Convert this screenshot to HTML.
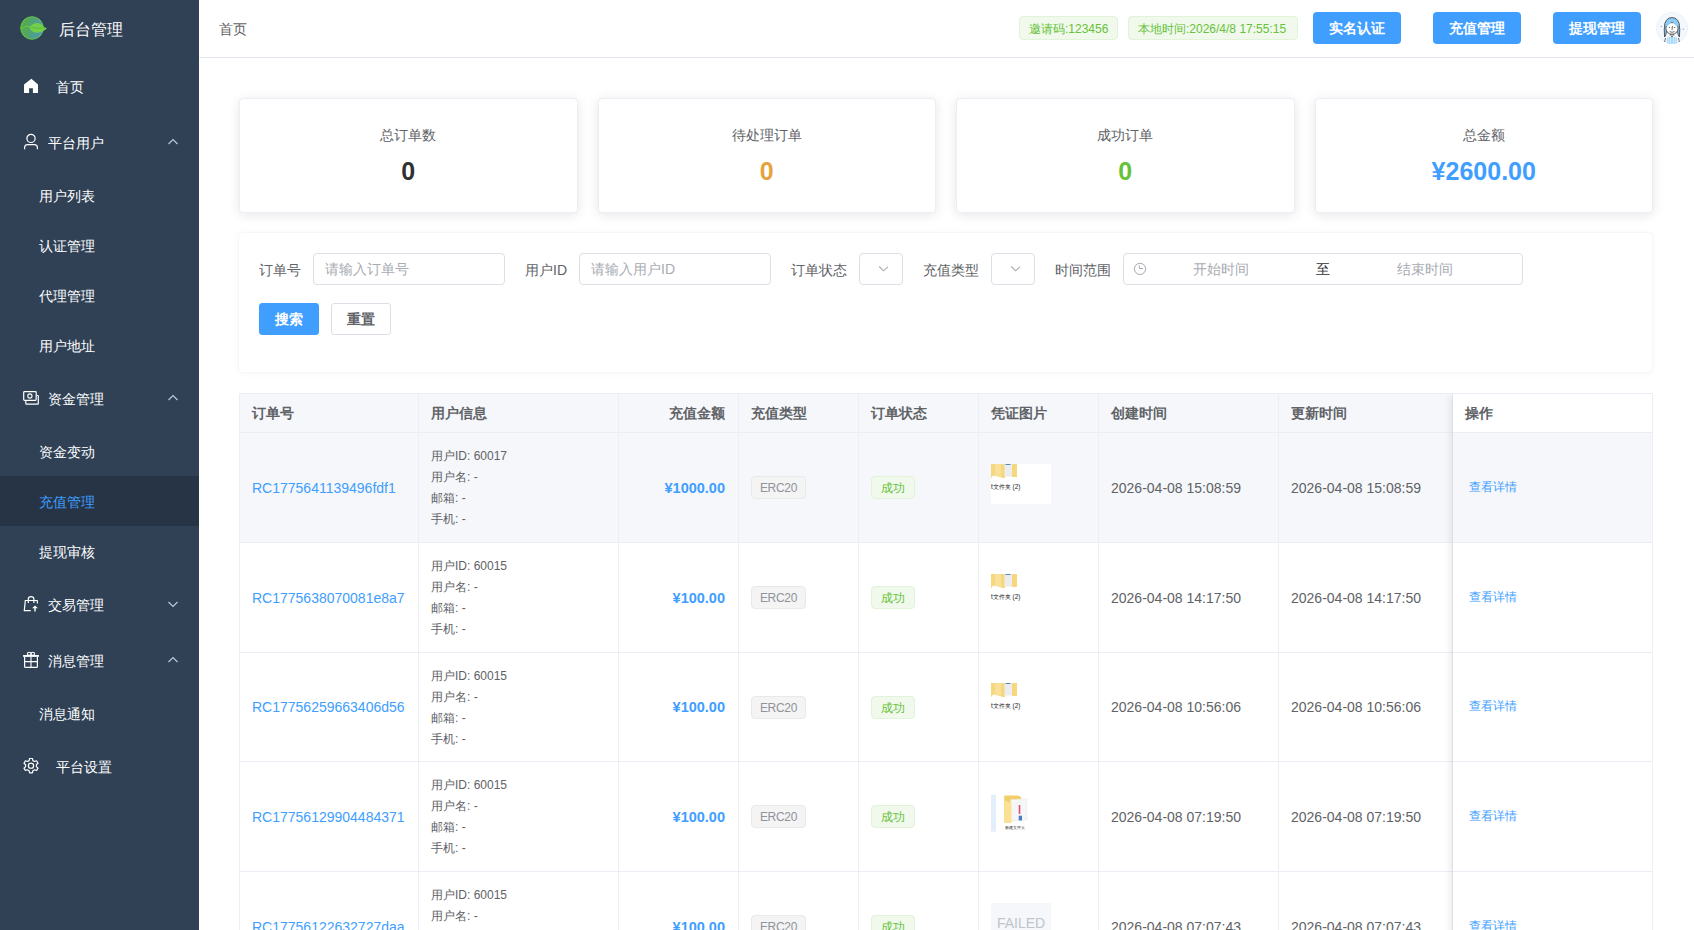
<!DOCTYPE html>
<html><head><meta charset="utf-8">
<style>
*{box-sizing:border-box;margin:0;padding:0}
html,body{width:1694px;height:930px;overflow:hidden;background:#fff;font-family:"Liberation Sans",sans-serif;}
.side{position:absolute;left:0;top:0;width:199px;height:930px;background:#304156;}
.logo{position:absolute;left:20px;top:16px;width:28px;height:25px}
.logo-t{position:absolute;left:59px;top:19px;font-size:16px;color:#fff;font-weight:500;line-height:22px;letter-spacing:0px}
.mi{position:absolute;left:0;width:199px;color:#bfcbd9;font-size:14px;line-height:20px;}
.mi.top{height:56px;}
.mi.sub{height:50px;}
.mi span{position:absolute;top:50%;margin-top:-9px;color:#fff;font-weight:500}
.mi.active{background:#263445}
.mi.active span{color:#409eff}
.mi svg.ic{position:absolute;left:22px;top:50%;margin-top:-9px;width:18px;height:18px}
.mi svg.ch{position:absolute;left:167px;top:50%;margin-top:-5px;width:12px;height:10px}
.head{position:absolute;left:199px;top:0;width:1495px;height:58px;border-bottom:1px solid #e4e7ed;background:#fff}
.bc{position:absolute;left:20px;top:19px;font-size:14px;color:#606266;line-height:20px}
.tag{position:absolute;top:16px;height:24px;line-height:24px;font-size:12px;color:#67c23a;background:#f0f9eb;border:1px solid #e1f3d8;border-radius:4px;padding:0 9px;white-space:nowrap}
.hbtn{position:absolute;top:12px;width:88px;height:32px;background:#409eff;color:#fff;font-size:14px;font-weight:600;border-radius:4px;text-align:center;line-height:32px}
.avatar{position:absolute;left:1457px;top:12px;width:32px;height:32px;border-radius:50%;background:#f5f8fc;overflow:hidden}
.card{position:absolute;top:98px;height:115px;background:#fff;border:1px solid #ebeef5;border-radius:4px;box-shadow:0 2px 12px 0 rgba(0,0,0,.1);text-align:center}
.card .t{position:absolute;left:0;right:0;top:26px;font-size:14px;color:#606266;line-height:20px}
.card .v{position:absolute;left:0;right:0;top:56px;font-size:25px;font-weight:700;line-height:32px}

.fcard{position:absolute;left:238px;top:232px;width:1415px;height:141px;background:#fff;border:1px solid #f6f7f9;border-radius:4px;box-shadow:0 1px 6px rgba(0,0,0,.035)}
.lbl{position:absolute;font-size:14px;color:#606266;line-height:22px;white-space:nowrap}
.inp{position:absolute;height:32px;border:1px solid #dcdfe6;border-radius:4px;background:#fff;font-size:14px;color:#a8abb2;line-height:30px;padding-left:11px;white-space:nowrap}
.btn{position:absolute;top:303px;height:32px;width:60px;border-radius:3px;font-size:14px;line-height:30px;text-align:center;font-weight:700}
.tbl{position:absolute;left:239px;top:393px;width:1414px;height:600px;border:1px solid #ebeef5;border-bottom:none;background:#fff;overflow:hidden}
.th{position:absolute;top:0;height:39px;background:#f5f7fa;border-bottom:1px solid #ebeef5}
.vl{position:absolute;top:0;width:1px;height:600px;background:#ebeef5}
.hl{position:absolute;left:0;width:1414px;height:1px;background:#ebeef5}
.htx{position:absolute;top:9px;font-size:14px;font-weight:700;color:#606266;line-height:20px;white-space:nowrap}
.row{position:absolute;left:0;width:1414px}
.c{position:absolute;white-space:nowrap}
.ono{font-size:14px;color:#409eff;line-height:20px}
.ui{font-size:12px;color:#606266;line-height:21px}
.amt{font-size:14.5px;color:#409eff;font-weight:700;line-height:20px;text-align:right}
.dt{font-size:14px;color:#606266;line-height:20px}
.act{font-size:12px;color:#409eff;line-height:18px}
.etag{height:23px;width:55px;text-align:center;letter-spacing:-0.3px;line-height:21px;padding:1px 0 0 0;font-size:12px;color:#909399;background:#f4f4f5;border:1px solid #e9e9eb;border-radius:4px}
.stag{height:23px;line-height:21px;padding:1px 9px 0 9px;font-size:12px;color:#67c23a;background:#f0f9eb;border:1px solid #e1f3d8;border-radius:4px}
.fix{position:absolute;left:1213px;top:0;width:201px;height:600px;box-shadow:-4px 0 8px -2px rgba(0,0,0,.10)}
</style></head><body>
<div class="side">
  <svg class="logo" viewBox="0 0 28 25"><defs><linearGradient id="lg" x1="0" x2="1" y1="0.3" y2="0.5"><stop offset="0" stop-color="#55b03a"/><stop offset="0.55" stop-color="#4fa17a"/><stop offset="1" stop-color="#4d99c0"/></linearGradient></defs><circle cx="12" cy="12" r="11.3" fill="url(#lg)" stroke="#6acb45" stroke-width="0.9"/><path d="M9.2 11.5 Q12.5 6.5 18.5 7 Q22.5 8 24.5 11.5 L27 12.3 Q23 16.5 17.5 16.8 Q11.5 16.8 9.2 11.5 Z" fill="#72cf49"/><path d="M0.8 13 Q5 9 11 10.8 Q17 12.5 26 12.2" fill="none" stroke="#6acb45" stroke-width="0.9"/><path d="M11 11.3 Q17 13 24.5 12" fill="none" stroke="#5aa83c" stroke-width="0.5"/></svg>
  <div class="logo-t">后台管理</div>

  <div class="mi top" style="top:58px"><svg class="ic" viewBox="0 0 18 18"><path d="M9.4 1.8 L16 7.5 L16 16 L10.9 16 L10.9 11.3 L7.1 11.3 L7.1 16 L2 16 L2 7.5 Z" fill="#fff"/></svg><span style="left:56px">首页</span></div>
  <div class="mi top" style="top:114px"><svg class="ic" viewBox="0 0 18 18"><circle cx="9" cy="5.4" r="4.1" fill="none" stroke="#fff" stroke-width="1.2"/><path d="M2.6 16.3 V14.6 Q2.6 11.6 5.6 11.6 H12.4 Q15.4 11.6 15.4 14.6 V16.3" fill="none" stroke="#fff" stroke-width="1.2"/></svg><span style="left:48px">平台用户</span><svg class="ch" viewBox="0 0 12 10"><path d="M1.5 7 L6 2.5 L10.5 7" fill="none" stroke="#bfcbd9" stroke-width="1.1"/></svg></div>
  <div class="mi sub" style="top:170px"><span style="left:39px">用户列表</span></div>
  <div class="mi sub" style="top:220px"><span style="left:39px">认证管理</span></div>
  <div class="mi sub" style="top:270px"><span style="left:39px">代理管理</span></div>
  <div class="mi sub" style="top:320px"><span style="left:39px">用户地址</span></div>
  <div class="mi top" style="top:370px"><svg class="ic" viewBox="0 0 18 18"><rect x="1.7" y="2.7" width="12.5" height="8.6" rx="0.8" fill="none" stroke="#fff" stroke-width="1.2"/><circle cx="7.9" cy="7" r="2.1" fill="none" stroke="#fff" stroke-width="1.1"/><path d="M3.8 11.9 V14.6 Q3.8 15.2 4.4 15.2 H15.7 Q16.3 15.2 16.3 14.6 V7.1 Q16.3 6.5 15.7 6.5 H14.8" fill="none" stroke="#fff" stroke-width="1.2"/></svg><span style="left:48px">资金管理</span><svg class="ch" viewBox="0 0 12 10"><path d="M1.5 7 L6 2.5 L10.5 7" fill="none" stroke="#bfcbd9" stroke-width="1.1"/></svg></div>
  <div class="mi sub" style="top:426px"><span style="left:39px">资金变动</span></div>
  <div class="mi sub active" style="top:476px"><span style="left:39px">充值管理</span></div>
  <div class="mi sub" style="top:526px"><span style="left:39px">提现审核</span></div>
  <div class="mi top" style="top:576px"><svg class="ic" viewBox="0 0 18 18"><path d="M6.3 8 V4.2 Q6.3 1.6 9.1 1.6 Q11.9 1.6 11.9 4.2 V8" fill="none" stroke="#fff" stroke-width="1.2"/><path d="M8.8 15.6 H2.3 L3.3 5.5 H15.2 L15.4 8.5" fill="none" stroke="#fff" stroke-width="1.2"/><path d="M13 16.6 V12" stroke="#fff" stroke-width="1.4"/><path d="M10.1 13.3 L13 10.4 L15.9 13.3 Z" fill="#fff"/></svg><span style="left:48px">交易管理</span><svg class="ch" viewBox="0 0 12 10"><path d="M1.5 3 L6 7.5 L10.5 3" fill="none" stroke="#bfcbd9" stroke-width="1.1"/></svg></div>
  <div class="mi top" style="top:632px"><svg class="ic" viewBox="0 0 18 18"><rect x="1.1" y="4" width="15.8" height="1.9" fill="#fff"/><path d="M2.6 5.9 V15.4 Q2.6 16.4 3.6 16.4 H14.4 Q15.4 16.4 15.4 15.4 V5.9" fill="none" stroke="#fff" stroke-width="1.2"/><path d="M2.6 10.6 H15.4 M9 5.9 V16.4" stroke="#fff" stroke-width="1.1"/><ellipse cx="7.2" cy="2.7" rx="1.8" ry="1.5" fill="none" stroke="#fff" stroke-width="1.1"/><ellipse cx="10.8" cy="2.7" rx="1.8" ry="1.5" fill="none" stroke="#fff" stroke-width="1.1"/></svg><span style="left:48px">消息管理</span><svg class="ch" viewBox="0 0 12 10"><path d="M1.5 7 L6 2.5 L10.5 7" fill="none" stroke="#bfcbd9" stroke-width="1.1"/></svg></div>
  <div class="mi sub" style="top:688px"><span style="left:39px">消息通知</span></div>
  <div class="mi top" style="top:738px"><svg class="ic" viewBox="0 0 18 18"><path d="M7.6 1.5 H10.4 L10.9 3.6 L12.6 4.5 L14.6 3.8 L16 6.2 L14.4 7.7 V9.6 L16 11.1 L14.6 13.5 L12.6 12.8 L10.9 13.7 L10.4 15.8 H7.6 L7.1 13.7 L5.4 12.8 L3.4 13.5 L2 11.1 L3.6 9.6 V7.7 L2 6.2 L3.4 3.8 L5.4 4.5 L7.1 3.6 Z" fill="none" stroke="#fff" stroke-width="1.2" stroke-linejoin="round"/><circle cx="9" cy="8.65" r="2.6" fill="none" stroke="#fff" stroke-width="1.2"/></svg><span style="left:56px">平台设置</span></div>
</div>
<div class="head">
  <div class="bc">首页</div>
  <div class="tag" style="left:820px;width:99px">邀请码:123456</div>
  <div class="tag" style="left:929px;width:170px">本地时间:2026/4/8 17:55:15</div>
  <div class="hbtn" style="left:1114px">实名认证</div>
  <div class="hbtn" style="left:1234px">充值管理</div>
  <div class="hbtn" style="left:1354px">提现管理</div>
  <div class="avatar"><svg width="32" height="32" viewBox="0 0 32 32">
    <circle cx="16" cy="16" r="15.7" fill="#f4f8fd" stroke="#e9edf3" stroke-width="0.6"/>
    <path d="M8.6 25 Q7.8 17 8.8 11.5 Q10.8 5.6 16 5.6 Q21.2 5.6 23.2 11.5 Q24.2 17 23.4 25 Q21.5 23 21.5 18 L10.5 18 Q10.5 23 8.6 25 Z" fill="#8ecbf5" stroke="#2f2f2f" stroke-width="0.75"/>
    <path d="M10.5 32 L11.2 25.5 Q16 23.8 20.8 25.5 L21.5 32 Z" fill="#a9dafa"/>
    <path d="M12.5 26 V32 M14.5 25 V32 M17.5 25 V32 M19.5 26 V32" stroke="#d8effd" stroke-width="0.7"/>
    <path d="M9.5 26 Q9 29 8.2 30.5 M22.5 26 Q23 29 23.8 30.5" stroke="#2f2f2f" stroke-width="0.7" fill="none"/>
    <ellipse cx="16" cy="16.4" rx="6.1" ry="5.9" fill="#fff" stroke="#2f2f2f" stroke-width="0.8"/>
    <path d="M9.9 14.5 Q10.2 8.6 16 8.4 Q21.8 8.6 22.1 14.5 Q19.6 13.2 17.4 10.9 L16 9.6 L14.6 10.9 Q12.4 13.2 9.9 14.5 Z" fill="#8ecbf5"/>
    <path d="M12.8 15.4 H14.2 M17.8 15.4 H19.2 M16.4 14 L16 18.2 M13.6 19.6 Q16 21 18.6 19.6" stroke="#2f2f2f" stroke-width="0.7" fill="none"/>
    <path d="M14.3 22.6 L16 25.2 L17.7 22.6 Z" fill="#fff" stroke="#2f2f2f" stroke-width="0.6"/>
    <circle cx="5.3" cy="14.5" r="0.8" fill="#7cc0f2"/><circle cx="27.4" cy="17.3" r="0.8" fill="#7cc0f2"/>
  </svg></div>
</div>

<div class="card" style="left:239px;width:338.5px"><div class="t">总订单数</div><div class="v" style="color:#303133">0</div></div>
<div class="card" style="left:597.5px;width:338.5px"><div class="t">待处理订单</div><div class="v" style="color:#e6a23c">0</div></div>
<div class="card" style="left:956px;width:338.5px"><div class="t">成功订单</div><div class="v" style="color:#67c23a">0</div></div>
<div class="card" style="left:1314.5px;width:338.5px"><div class="t">总金额</div><div class="v" style="color:#409eff">¥2600.00</div></div>

<div class="fcard"></div>
<div class="lbl" style="left:259px;top:259px">订单号</div>
<div class="inp" style="left:313px;top:253px;width:192px">请输入订单号</div>
<div class="lbl" style="left:525px;top:259px">用户ID</div>
<div class="inp" style="left:579px;top:253px;width:192px">请输入用户ID</div>
<div class="lbl" style="left:791px;top:259px">订单状态</div>
<div class="inp" style="left:859px;top:253px;width:44px"><svg style="position:absolute;left:18px;top:11px" width="12" height="8" viewBox="0 0 12 8"><path d="M1.2 1.5 L5.5 5.8 L10 1.8" fill="none" stroke="#a8abb2" stroke-width="1.1"/></svg></div>
<div class="lbl" style="left:923px;top:259px">充值类型</div>
<div class="inp" style="left:991px;top:253px;width:44px"><svg style="position:absolute;left:18px;top:11px" width="12" height="8" viewBox="0 0 12 8"><path d="M1.2 1.5 L5.5 5.8 L10 1.8" fill="none" stroke="#a8abb2" stroke-width="1.1"/></svg></div>
<div class="lbl" style="left:1055px;top:259px">时间范围</div>
<div class="inp" style="left:1123px;top:253px;width:400px;padding:0">
  <svg style="position:absolute;left:9px;top:8px" width="14" height="14" viewBox="0 0 14 14"><circle cx="7" cy="6.9" r="5.6" fill="none" stroke="#a8abb2" stroke-width="1"/><path d="M6.3 3.4 V6.5 H10.1" fill="none" stroke="#a8abb2" stroke-width="1"/></svg>
  <span style="position:absolute;left:69px;top:0">开始时间</span>
  <span style="position:absolute;left:192px;top:0;color:#303133">至</span>
  <span style="position:absolute;left:273px;top:0">结束时间</span>
</div>
<div class="btn" style="left:259px;background:#409eff;color:#fff;border:1px solid #409eff">搜索</div>
<div class="btn" style="left:331px;background:#fff;color:#606266;border:1px solid #dcdfe6">重置</div>
<div class="tbl">
<div class="th" style="left:0;width:1213px"></div>
<div class="th" style="left:1213px;width:201px;background:#fff"></div>
<div class="row" style="top:39px;height:109px;background:#f5f7fa"></div>
<div class="htx" style="left:12px">订单号</div>
<div class="htx" style="left:191px">用户信息</div>
<div class="htx" style="right:927px">充值金额</div>
<div class="htx" style="left:511px">充值类型</div>
<div class="htx" style="left:631px">订单状态</div>
<div class="htx" style="left:751px">凭证图片</div>
<div class="htx" style="left:871px">创建时间</div>
<div class="htx" style="left:1051px">更新时间</div>
<div class="htx" style="left:1225px">操作</div>
<div class="vl" style="left:178px"></div>
<div class="vl" style="left:378px"></div>
<div class="vl" style="left:498px"></div>
<div class="vl" style="left:618px"></div>
<div class="vl" style="left:738px"></div>
<div class="vl" style="left:858px"></div>
<div class="vl" style="left:1038px"></div>
<div class="vl" style="left:1212px"></div>
<div class="hl" style="top:148px"></div>
<div class="hl" style="top:258px"></div>
<div class="hl" style="top:367px"></div>
<div class="hl" style="top:477px"></div>
<div class="c ono" style="left:12px;top:83.5px">RC1775641139496fdf1</div>
<div class="c ui" style="left:191px;top:51.5px">用户ID: 60017<br>用户名: -<br>邮箱: -<br>手机: -</div>
<div class="c amt" style="right:927px;top:83.5px">¥1000.00</div>
<div class="c etag" style="left:511px;top:82.0px">ERC20</div>
<div class="c stag" style="left:631px;top:82.0px">成功</div>
<div class="c" style="left:751px;top:69.5px;width:60px;height:40px"><svg width="60" height="40" viewBox="0 0 60 40"><rect width="60" height="40" fill="#fff"/><rect x="0" y="0" width="14" height="14" fill="#f5d77e"/><rect x="4" y="0" width="6" height="14" fill="#f8e09a"/><path d="M0 14.5 L2 11.5 L14 14.5 Z" fill="#fff"/><rect x="13.5" y="0" width="7.5" height="12.5" fill="#ececee"/><rect x="14.5" y="0" width="5" height="0.9" fill="#3d7fc4"/><rect x="21" y="0" width="5" height="13" fill="#f5d77e"/><text x="0" y="24.5" font-size="6.4" fill="#222" font-family="Liberation Sans">t文件夹 (2)</text></svg></div>
<div class="c dt" style="left:871px;top:83.5px">2026-04-08 15:08:59</div>
<div class="c dt" style="left:1051px;top:83.5px">2026-04-08 15:08:59</div>
<div class="c act" style="left:1228.5px;top:83.5px">查看详情</div>
<div class="c ono" style="left:12px;top:193.5px">RC1775638070081e8a7</div>
<div class="c ui" style="left:191px;top:161.5px">用户ID: 60015<br>用户名: -<br>邮箱: -<br>手机: -</div>
<div class="c amt" style="right:927px;top:193.5px">¥100.00</div>
<div class="c etag" style="left:511px;top:192.0px">ERC20</div>
<div class="c stag" style="left:631px;top:192.0px">成功</div>
<div class="c" style="left:751px;top:179.5px;width:60px;height:40px"><svg width="60" height="40" viewBox="0 0 60 40"><rect width="60" height="40" fill="#fff"/><rect x="0" y="0" width="14" height="14" fill="#f5d77e"/><rect x="4" y="0" width="6" height="14" fill="#f8e09a"/><path d="M0 14.5 L2 11.5 L14 14.5 Z" fill="#fff"/><rect x="13.5" y="0" width="7.5" height="12.5" fill="#ececee"/><rect x="14.5" y="0" width="5" height="0.9" fill="#3d7fc4"/><rect x="21" y="0" width="5" height="13" fill="#f5d77e"/><text x="0" y="24.5" font-size="6.4" fill="#222" font-family="Liberation Sans">t文件夹 (2)</text></svg></div>
<div class="c dt" style="left:871px;top:193.5px">2026-04-08 14:17:50</div>
<div class="c dt" style="left:1051px;top:193.5px">2026-04-08 14:17:50</div>
<div class="c act" style="left:1228.5px;top:193.5px">查看详情</div>
<div class="c ono" style="left:12px;top:303.0px">RC17756259663406d56</div>
<div class="c ui" style="left:191px;top:271.5px">用户ID: 60015<br>用户名: -<br>邮箱: -<br>手机: -</div>
<div class="c amt" style="right:927px;top:303.0px">¥100.00</div>
<div class="c etag" style="left:511px;top:301.5px">ERC20</div>
<div class="c stag" style="left:631px;top:301.5px">成功</div>
<div class="c" style="left:751px;top:289.0px;width:60px;height:40px"><svg width="60" height="40" viewBox="0 0 60 40"><rect width="60" height="40" fill="#fff"/><rect x="0" y="0" width="14" height="14" fill="#f5d77e"/><rect x="4" y="0" width="6" height="14" fill="#f8e09a"/><path d="M0 14.5 L2 11.5 L14 14.5 Z" fill="#fff"/><rect x="13.5" y="0" width="7.5" height="12.5" fill="#ececee"/><rect x="14.5" y="0" width="5" height="0.9" fill="#3d7fc4"/><rect x="21" y="0" width="5" height="13" fill="#f5d77e"/><text x="0" y="24.5" font-size="6.4" fill="#222" font-family="Liberation Sans">t文件夹 (2)</text></svg></div>
<div class="c dt" style="left:871px;top:303.0px">2026-04-08 10:56:06</div>
<div class="c dt" style="left:1051px;top:303.0px">2026-04-08 10:56:06</div>
<div class="c act" style="left:1228.5px;top:303.0px">查看详情</div>
<div class="c ono" style="left:12px;top:412.5px">RC17756129904484371</div>
<div class="c ui" style="left:191px;top:380.5px">用户ID: 60015<br>用户名: -<br>邮箱: -<br>手机: -</div>
<div class="c amt" style="right:927px;top:412.5px">¥100.00</div>
<div class="c etag" style="left:511px;top:411.0px">ERC20</div>
<div class="c stag" style="left:631px;top:411.0px">成功</div>
<div class="c" style="left:751px;top:398.5px;width:60px;height:40px"><svg width="60" height="40" viewBox="0 0 60 40"><rect x="0" y="1.7" width="5" height="37" fill="#e3effb"/><path d="M13.2 2.5 H27 L30 4 V26 L13.2 30 Z" fill="#f3cf6a"/><path d="M19.6 6.5 L35.8 5.7 V27 L19.6 28 Z" fill="#f6f6f6" stroke="#e2e2e2" stroke-width="0.4"/><path d="M13.2 7 L20.5 10.5 V30 L13.2 30 Z" fill="#fbe196"/><rect x="27.7" y="12" width="1.6" height="9" fill="#d9507a"/><rect x="27.7" y="22.7" width="3.3" height="4.8" fill="#4a7ec0"/><text x="14" y="36.3" font-size="4.2" fill="#333" font-family="Liberation Sans">新建文件夹</text></svg></div>
<div class="c dt" style="left:871px;top:412.5px">2026-04-08 07:19:50</div>
<div class="c dt" style="left:1051px;top:412.5px">2026-04-08 07:19:50</div>
<div class="c act" style="left:1228.5px;top:412.5px">查看详情</div>
<div class="c ono" style="left:12px;top:522.5px">RC17756122632727daa</div>
<div class="c ui" style="left:191px;top:490.5px">用户ID: 60015<br>用户名: -<br>邮箱: -<br>手机: -</div>
<div class="c amt" style="right:927px;top:522.5px">¥100.00</div>
<div class="c etag" style="left:511px;top:521.0px">ERC20</div>
<div class="c stag" style="left:631px;top:521.0px">成功</div>
<div class="c" style="left:751px;top:508.5px;width:60px;height:40px;background:#f5f7fa;color:#c0c4cc;font-size:14px;text-align:center;line-height:40px">FAILED</div>
<div class="c dt" style="left:871px;top:522.5px">2026-04-08 07:07:43</div>
<div class="c dt" style="left:1051px;top:522.5px">2026-04-08 07:07:43</div>
<div class="c act" style="left:1228.5px;top:522.5px">查看详情</div>
<div class="fix"></div>
</div>
</body></html>
